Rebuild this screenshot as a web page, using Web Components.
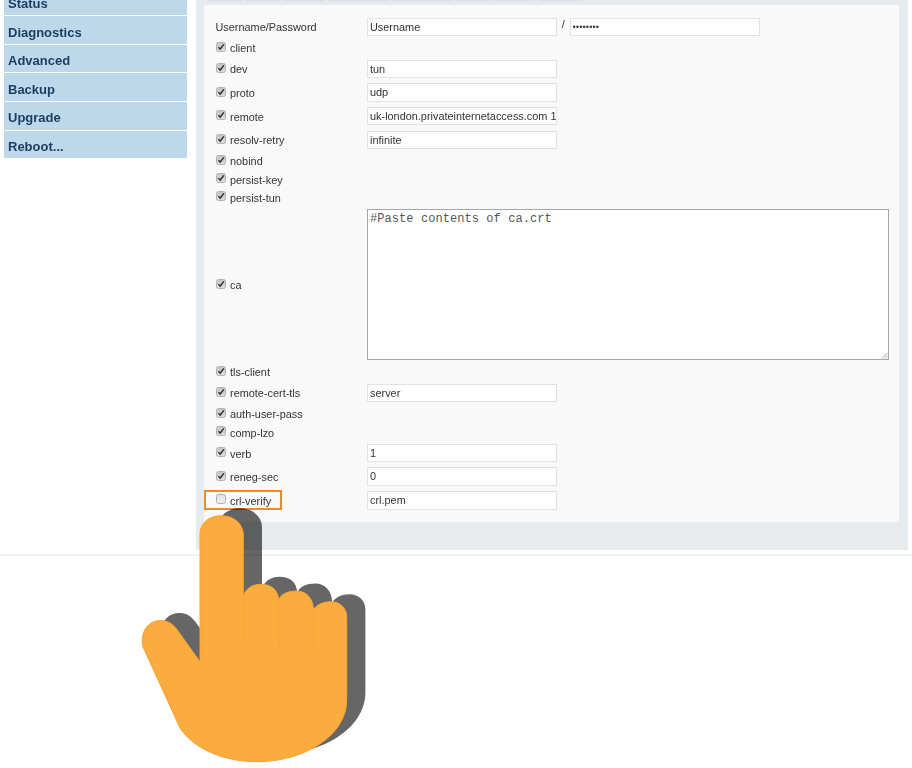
<!DOCTYPE html>
<html><head><meta charset="utf-8">
<style>
html,body{margin:0;height:768px;overflow:hidden;background:#fff}
body{font-family:"Liberation Sans",Arial,sans-serif;color:#333;position:relative}
app-shell{display:block}
</style></head><body>
<app-shell>
  <side-nav slot="nav">
    <nav-item>Status</nav-item><nav-item>Diagnostics</nav-item><nav-item>Advanced</nav-item>
    <nav-item>Backup</nav-item><nav-item>Upgrade</nav-item><nav-item>Reboot...</nav-item>
  </side-nav>
  <config-panel slot="main">
    <config-row plain kind="field"><span slot="label">Username/Password</span>
      <text-field slot="field">Username</text-field><slash-sep slot="field">/</slash-sep><text-field slot="field" password>••••••••</text-field></config-row>
    <config-row checked><span slot="label">client</span></config-row>
    <config-row checked kind="field"><span slot="label">dev</span><text-field slot="field">tun</text-field></config-row>
    <config-row checked kind="field"><span slot="label">proto</span><text-field slot="field">udp</text-field></config-row>
    <config-row checked kind="field"><span slot="label">remote</span><text-field slot="field">uk-london.privateinternetaccess.com 1</text-field></config-row>
    <config-row checked kind="field"><span slot="label">resolv-retry</span><text-field slot="field">infinite</text-field></config-row>
    <config-row checked><span slot="label">nobind</span></config-row>
    <config-row checked><span slot="label">persist-key</span></config-row>
    <config-row checked><span slot="label">persist-tun</span></config-row>
    <config-row checked kind="area"><span slot="label">ca</span><area-field slot="field">#Paste contents of ca.crt</area-field></config-row>
    <config-row checked><span slot="label">tls-client</span></config-row>
    <config-row checked kind="field"><span slot="label">remote-cert-tls</span><text-field slot="field">server</text-field></config-row>
    <config-row checked><span slot="label">auth-user-pass</span></config-row>
    <config-row checked><span slot="label">comp-lzo</span></config-row>
    <config-row checked kind="field"><span slot="label">verb</span><text-field slot="field">1</text-field></config-row>
    <config-row checked kind="field"><span slot="label">reneg-sec</span><text-field slot="field">0</text-field></config-row>
    <config-row kind="field" highlight><span slot="label">crl-verify</span><text-field slot="field">crl.pem</text-field></config-row>
  </config-panel>
</app-shell>
<pointing-hand></pointing-hand>
<script>
function def(name, html, extra){
  const t=document.createElement('template');t.innerHTML=html;
  customElements.define(name,class extends HTMLElement{
    constructor(){super();this.attachShadow({mode:'open'}).appendChild(t.content.cloneNode(true));}
    connectedCallback(){extra&&extra.call(this);}
  });
}
def('app-shell',`<style>
:host{display:block;filter:blur(.35px)}
.top{display:grid;grid-template-columns:183px 712px;column-gap:9px;padding-left:4px;align-items:start;height:550px}
.rule{height:2px;margin-top:4px;background:#eef0f2}
</style><div class="top"><slot name="nav"></slot><slot name="main"></slot></div><div class="rule"></div>`);
def('side-nav',`<style>
:host{display:flex;flex-direction:column;gap:1px;margin-top:-12.3px}
</style><slot></slot>`);
def('nav-item',`<style>
:host{display:flex;align-items:center;height:27.6px;box-sizing:border-box;padding:4px 0 0 4px;background:#bdd8eb;color:#1b3d5f;font:bold 13px/1 "Liberation Sans",Arial,sans-serif}
</style><slot></slot>`);
def('config-panel',`<style>
:host{display:block;height:550px;box-sizing:border-box;background:#e8ebee;padding:0 9px 0 8px}
.tabs{display:flex;gap:2.5px;height:1.5px;margin:0 0 3.5px 4px}
.tabs i{display:block;height:100%;background:#dfe2e6}
.in{height:517px;box-sizing:border-box;background:#f9f9f9;padding:10px 0 0 0}
</style><div class="tabs"><i style="width:35px"></i><i style="width:34px"></i><i style="width:43px"></i><i style="width:62px"></i><i style="width:60px"></i><i style="width:38px"></i><i style="width:40px"></i><i style="width:45px"></i></div><div class="in"><slot></slot></div>`);
def('config-row',`<style>
:host{display:grid;position:relative;grid-template-columns:163px 1fr;align-items:center;height:18.3px;font-size:10.9px;color:#333}
:host([kind=field]){height:23.7px}
:host([kind=area]){height:156px}
.l{display:flex;align-items:center;padding-left:12px;line-height:1}
:host([plain]) .l{padding-left:11.5px}
.lab{position:relative;top:1px}
.f{display:flex;align-items:flex-start}
.hl{display:none;position:absolute;left:0;top:1.3px;width:78px;height:20px;box-sizing:border-box;border:2px solid #f0892a}
:host([highlight]) .hl{display:block}
:host([plain]) tick-box{display:none}
</style><div class="l"><tick-box></tick-box><span class="lab"><slot name="label"></slot></span></div><div class="f"><slot name="field"></slot></div><div class="hl"></div>`,
function(){ if(this.hasAttribute('checked')) this.shadowRoot.querySelector('tick-box').setAttribute('checked',''); });
def('tick-box',`<style>
:host{display:block;width:10px;height:10px;margin-right:4px;box-sizing:border-box;position:relative;top:-1px;border:1px solid #b0b0b0;border-radius:2.5px;background:linear-gradient(#e2e2e2,#efefef)}
svg{display:none;position:absolute;left:0;top:0;width:8px;height:8px}
:host([checked]) svg{display:block}
:host([checked]){background:linear-gradient(#c6c6c6,#dcdcdc)}
</style><svg viewBox="0 0 8 8"><path d="M1.4 4.2 3.2 6 6.8 1.4" fill="none" stroke="#333" stroke-width="1.5"/></svg>`);
def('slash-sep',`<style>
:host{display:block;width:12.5px;text-align:center;position:relative;top:-3px;font-size:11px;line-height:18px}
</style><slot></slot>`);
def('text-field',`<style>
:host{display:block;width:190px;height:18.5px;box-sizing:border-box;border:1px solid #e2e2e2;background:#fff;padding:0 2px;overflow:hidden;white-space:nowrap;font-size:10.9px;line-height:17px;color:#333}
:host([password]){font-size:9.5px;line-height:15.5px;color:#444}
</style><slot></slot>`);
def('area-field',`<style>
:host{display:block;position:relative;width:522px;height:151px;box-sizing:border-box;border:1px solid #a6a6a6;background:#fff;padding:2px;font:12px/14px "Liberation Mono","Courier New",monospace;letter-spacing:.07px;color:#555}
svg{position:absolute;right:0;bottom:0;width:7px;height:7px}
</style><slot></slot><svg viewBox="0 0 7 7"><path d="M1 6.5 6.5 1M4 6.5 6.5 4" stroke="#999" fill="none"/></svg>`);
def('pointing-hand',`<style>
:host{display:block;position:absolute;left:0;top:0;width:912px;height:768px;pointer-events:none}
svg{display:block}
</style><svg width="912" height="768" viewBox="0 0 912 768">
<defs><path id="h" d="M200 661.7V534C200 523 209 515.7 221 515.7 234 515.7 243.3 524 243.3 535V597C245 589 252 584.3 261 584.3 271 584.3 278.3 590 278.5 600 281 594 288 591 296.5 591 306 591 313.3 598 313.5 610 316 605 323 601.7 331 601.7 340 601.7 346.7 608 346.7 617V700C346.7 735 305 761.7 257 761.7 222 761.7 193 748 180 728L143.5 648C142 644 142 641 142.5 637 144 627 151 620.5 160.5 620.5 167 620.5 172 623 176.5 629Z"/></defs>
<use href="#h" x="18.7" y="-7.5" fill="#000" fill-opacity=".6"/>
<use href="#h" fill="#faad3e" stroke="#f9a231" stroke-width="1"/>
<path d="M243.5 597V640M278.5 600V647M313.5 610V651" stroke="#f9a231" stroke-width="1" fill="none"/>
</svg>`);
</script>
</body></html>
